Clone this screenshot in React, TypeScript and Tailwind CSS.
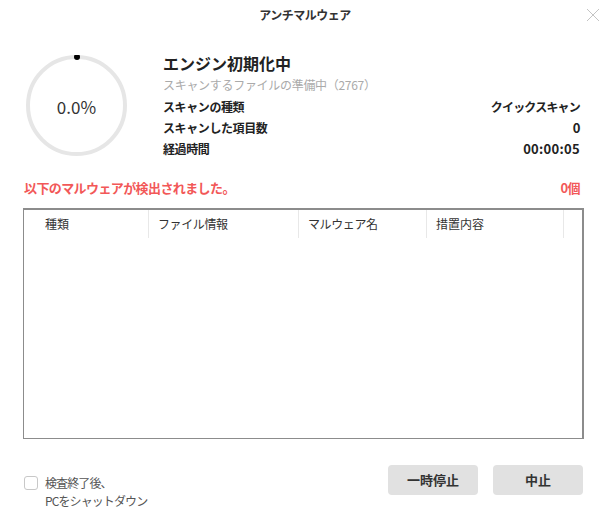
import React from "react";

const font = { fontFamily: '"Noto Sans CJK JP", "Noto Sans", sans-serif' };

function Ring() {
  return (
    <div className="relative w-[101px] h-[101px] shrink-0">
      <svg width="101" height="101" viewBox="0 0 101 101" className="absolute inset-0">
        <circle cx="50.5" cy="50.5" r="48.5" fill="none" stroke="#e6e6e6" strokeWidth="4" />
        <circle cx="51" cy="2" r="3" fill="#000" />
      </svg>
      <div className="absolute inset-0 flex items-center justify-center text-[17px] text-[#333]" style={{ ...font, paddingTop: 2 }}>
        0.0%
      </div>
    </div>
  );
}

export default function App() {
  return (
    <div className="w-[610px] h-[520px] bg-white relative overflow-hidden text-[#222]" style={font}>
      {/* title bar */}
      <div className="h-[30px] flex items-center justify-center text-[12px] font-bold text-[#333] tracking-[-0.5px]">
        アンチマルウェア
      </div>
      <svg className="absolute right-[10px] top-[8px]" width="14" height="14" viewBox="0 0 14 14">
        <path d="M1 1 L13 13 M13 1 L1 13" stroke="#c4c4c4" strokeWidth="1" />
      </svg>

      {/* top section */}
      <div className="flex pl-[26px] pr-[30px] mt-[22px]">
        <div className="pt-[3px]">
          <Ring />
        </div>
        <div className="flex-1 ml-[36px] flex flex-col">
          <div className="h-[22px] flex items-center text-[16px] font-bold text-[#222]">エンジン初期化中</div>
          <div className="h-[22px] flex items-center text-[12px] text-[#aaaaaa] tracking-[-0.3px]">スキャンするファイルの準備中（2767）</div>
          <div className="h-[21px] flex items-center justify-between text-[12px] font-bold tracking-[-0.4px]">
            <span>スキャンの種類</span>
            <span className="tracking-[-0.8px]">クイックスキャン</span>
          </div>
          <div className="h-[21px] flex items-center justify-between text-[12px] font-bold tracking-[-0.4px]">
            <span>スキャンした項目数</span>
            <span className="text-[13px]">0</span>
          </div>
          <div className="h-[21px] flex items-center justify-between text-[12px] font-bold tracking-[-0.4px]">
            <span>経過時間</span>
            <span className="text-[13px] tracking-[0.3px]">00:00:05</span>
          </div>
        </div>
      </div>

      {/* detected row */}
      <div className="flex justify-between items-center pl-[24px] pr-[30px] mt-[19px] h-[20px] text-[13px] font-bold text-[#f25858] tracking-[-0.6px]">
        <span>以下のマルウェアが検出されました。</span>
        <span>0個</span>
      </div>

      {/* table */}
      <div className="ml-[23px] mt-[10px] w-[561px] h-[231px] border border-[#8c8c8c] border-t-2 border-r-2">
        <div className="flex h-[28px] text-[12px] text-[#333]">
          <div className="w-[125px] flex items-center pl-[21px] border-r border-[#e8e8e8]">種類</div>
          <div className="w-[150px] flex items-center pl-[9px] border-r border-[#e8e8e8] tracking-[-0.4px]">ファイル情報</div>
          <div className="w-[128px] flex items-center pl-[9px] border-r border-[#e8e8e8] tracking-[-0.4px]">マルウェア名</div>
          <div className="w-[137px] flex items-center pl-[9px] border-r border-[#e8e8e8]">措置内容</div>
        </div>
      </div>

      {/* bottom */}
      <div className="flex justify-between pl-[24px] pr-[27px] mt-[26px]">
        <div className="flex items-start gap-[7px] pt-[10px]">
          <div className="w-[14px] h-[14px] border border-[#c8c8c8] rounded-[3px] mt-[1px] bg-white" />
          <div className="text-[12px] leading-[18px] text-[#555] tracking-[-0.9px] -mt-[1px]">
            <div>検査終了後、</div>
            <div>PCをシャットダウン</div>
          </div>
        </div>
        <div className="flex gap-[15px]">
          <button className="w-[90px] h-[30px] rounded-[4px] bg-[#e1e1e1] text-[13px] font-bold text-[#333]">一時停止</button>
          <button className="w-[90px] h-[30px] rounded-[4px] bg-[#e1e1e1] text-[13px] font-bold text-[#333]">中止</button>
        </div>
      </div>
    </div>
  );
}
